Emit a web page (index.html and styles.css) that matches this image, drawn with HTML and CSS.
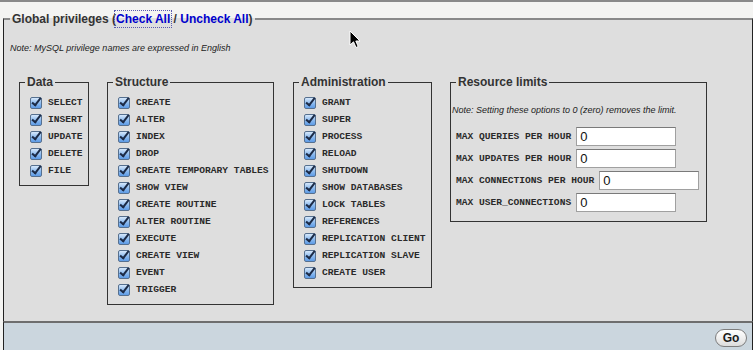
FILE: index.html
```html
<!DOCTYPE html>
<html lang="en">
<head>
    <meta charset="UTF-8">
    <title>Global privileges</title>
    <link rel="stylesheet" href="styles.css">
</head>
<body>
    <fieldset class="global">
        <legend>Global privileges (<a href="#" class="focus">Check All</a> / <a href="#">Uncheck All</a>)</legend>
        <p class="note">Note: MySQL privilege names are expressed in English</p>

        <div class="groups">
            <!-- Data -->
            <fieldset class="group data">
                <legend>Data</legend>
                <ul class="privs">
                    <li><span class="box"></span>SELECT</li>
                    <li><span class="box"></span>INSERT</li>
                    <li><span class="box"></span>UPDATE</li>
                    <li><span class="box"></span>DELETE</li>
                    <li><span class="box"></span>FILE</li>
                </ul>
            </fieldset>

            <!-- Structure -->
            <fieldset class="group structure">
                <legend>Structure</legend>
                <ul class="privs">
                    <li><span class="box"></span>CREATE</li>
                    <li><span class="box"></span>ALTER</li>
                    <li><span class="box"></span>INDEX</li>
                    <li><span class="box"></span>DROP</li>
                    <li><span class="box"></span>CREATE TEMPORARY TABLES</li>
                    <li><span class="box"></span>SHOW VIEW</li>
                    <li><span class="box"></span>CREATE ROUTINE</li>
                    <li><span class="box"></span>ALTER ROUTINE</li>
                    <li><span class="box"></span>EXECUTE</li>
                    <li><span class="box"></span>CREATE VIEW</li>
                    <li><span class="box"></span>EVENT</li>
                    <li><span class="box"></span>TRIGGER</li>
                </ul>
            </fieldset>

            <!-- Administration -->
            <fieldset class="group admin">
                <legend>Administration</legend>
                <ul class="privs">
                    <li><span class="box"></span>GRANT</li>
                    <li><span class="box"></span>SUPER</li>
                    <li><span class="box"></span>PROCESS</li>
                    <li><span class="box"></span>RELOAD</li>
                    <li><span class="box"></span>SHUTDOWN</li>
                    <li><span class="box"></span>SHOW DATABASES</li>
                    <li><span class="box"></span>LOCK TABLES</li>
                    <li><span class="box"></span>REFERENCES</li>
                    <li><span class="box"></span>REPLICATION CLIENT</li>
                    <li><span class="box"></span>REPLICATION SLAVE</li>
                    <li><span class="box"></span>CREATE USER</li>
                </ul>
            </fieldset>

            <!-- Resource limits -->
            <fieldset class="group limits">
                <legend>Resource limits</legend>
                <p class="note limit-note">Note: Setting these options to 0 (zero) removes the limit.</p>
                <div class="item"><label>MAX QUERIES PER HOUR</label><input type="text" value="0"></div>
                <div class="item"><label>MAX UPDATES PER HOUR</label><input type="text" value="0"></div>
                <div class="item"><label>MAX CONNECTIONS PER HOUR</label><input type="text" value="0"></div>
                <div class="item"><label>MAX USER_CONNECTIONS</label><input type="text" value="0"></div>
            </fieldset>
        </div>
    </fieldset>

    <div class="footer">
        <button class="go">Go</button>
    </div>

    <!-- mouse pointer -->
    <svg class="cursor" width="13" height="19" viewBox="0 0 13 19">
        <path d="M1 1 L1 15 L4.5 11.8 L7 17.5 L9.2 16.5 L6.8 11 L11 11 Z" fill="#000" stroke="#fff" stroke-width="1"/>
    </svg>
</body>
</html>
```

FILE: styles.css
```css
body {
    margin: 0;
    border-top: 2px solid #8a8a8a;
    background-color: #f4f4f2;
    font-family: 'Liberation Sans', Arial, sans-serif;
    color: #222;
    height: 348px;
    overflow: hidden;
    position: relative;
}

/* 外枠 */
.global {
    margin: 9px 0 0 3px;
    padding: 0 0 16px 6px;
    border: 1px solid #222;
    border-top: 2px solid #8a8a8a;
    border-bottom: none;
    background-color: #dedede;
    min-inline-size: 0;
}

.global > legend {
    padding: 0 2px;
    font-size: 12px;
    line-height: 16px;
    font-weight: bold;
    color: #333;
}

.global > legend a {
    color: #0000cc;
    text-decoration: none;
}

.global > legend a.focus {
    outline: 1px dotted #5a5ab0;
    outline-offset: 1px;
}

.note {
    font-style: italic;
    font-size: 9px;
    line-height: 12px;
    margin: 15px 0 0;
    color: #222;
}

/* グループ */
.groups {
    display: flex;
    align-items: flex-start;
    gap: 18px;
    margin: 21px 0 0 9px;
}

.group {
    margin: 0;
    padding: 0 6px 6px 5px;
    border: 1px solid #333;
    box-sizing: border-box;
    min-inline-size: 0;
}

.group > legend {
    padding: 0 2px;
    font-size: 12px;
    line-height: 14px;
    font-weight: bold;
    color: #333;
}

.data { width: 70px; }
.structure { width: 167px; }
.admin { width: 139px; margin-left: 1px; }
.limits { width: 257px; padding-bottom: 6px; }

.privs {
    list-style: none;
    margin: 5px 0 0 5px;
    padding: 0;
}

.privs li {
    display: flex;
    align-items: center;
    gap: 6px;
    height: 17px;
    font-family: 'Liberation Mono', 'Courier New', monospace;
    font-size: 9.6px;
    font-weight: bold;
    color: #2a2a2a;
    white-space: nowrap;
}

/* チェックボックス */
.box {
    position: relative;
    flex: none;
    width: 10px;
    height: 10px;
    border: 1px solid #56708f;
    border-radius: 2px;
    background: linear-gradient(#d6e8fb, #8fbcef 50%, #5d9be6);
}

.box::after {
    content: "";
    position: absolute;
    left: 3px;
    top: -2px;
    width: 3px;
    height: 8px;
    border-right: 2px solid #1c2b47;
    border-bottom: 2px solid #1c2b47;
    transform: rotate(38deg);
}

/* リソース制限 */
.limit-note {
    margin: 15px 0 11px -4px;
}

.item {
    display: flex;
    align-items: center;
    gap: 5px;
    margin-bottom: 3px;
}

.item label {
    font-family: 'Liberation Mono', 'Courier New', monospace;
    font-size: 9.6px;
    font-weight: bold;
    color: #2a2a2a;
    white-space: nowrap;
}

.item input {
    width: 100px;
    height: 19px;
    box-sizing: border-box;
    margin: 0;
    padding: 0 3px;
    border: 1px solid #a0a0a0;
    border-top-color: #7a7a7a;
    background: #fff;
    font-family: 'Liberation Sans', Arial, sans-serif;
    font-size: 13px;
    color: #111;
}

/* フッター */
.footer {
    margin-left: 3px;
    border-left: 1px solid #222;
    border-right: 1px solid #222;
    border-top: 2px solid #6e6e6e;
    background-color: #cbd6de;
    height: 40px;
    padding: 5px 5px 0 0;
    text-align: right;
}

.go {
    width: 32px;
    height: 18px;
    padding: 0;
    border: 1px solid #7d7d7d;
    border-radius: 9px;
    background: linear-gradient(#ffffff, #ececec 60%, #dcdcdc);
    font-family: 'Liberation Sans', Arial, sans-serif;
    font-size: 12px;
    font-weight: bold;
    color: #1a1a1a;
    line-height: 16px;
}

.cursor {
    position: absolute;
    left: 349px;
    top: 28px;
}
```
